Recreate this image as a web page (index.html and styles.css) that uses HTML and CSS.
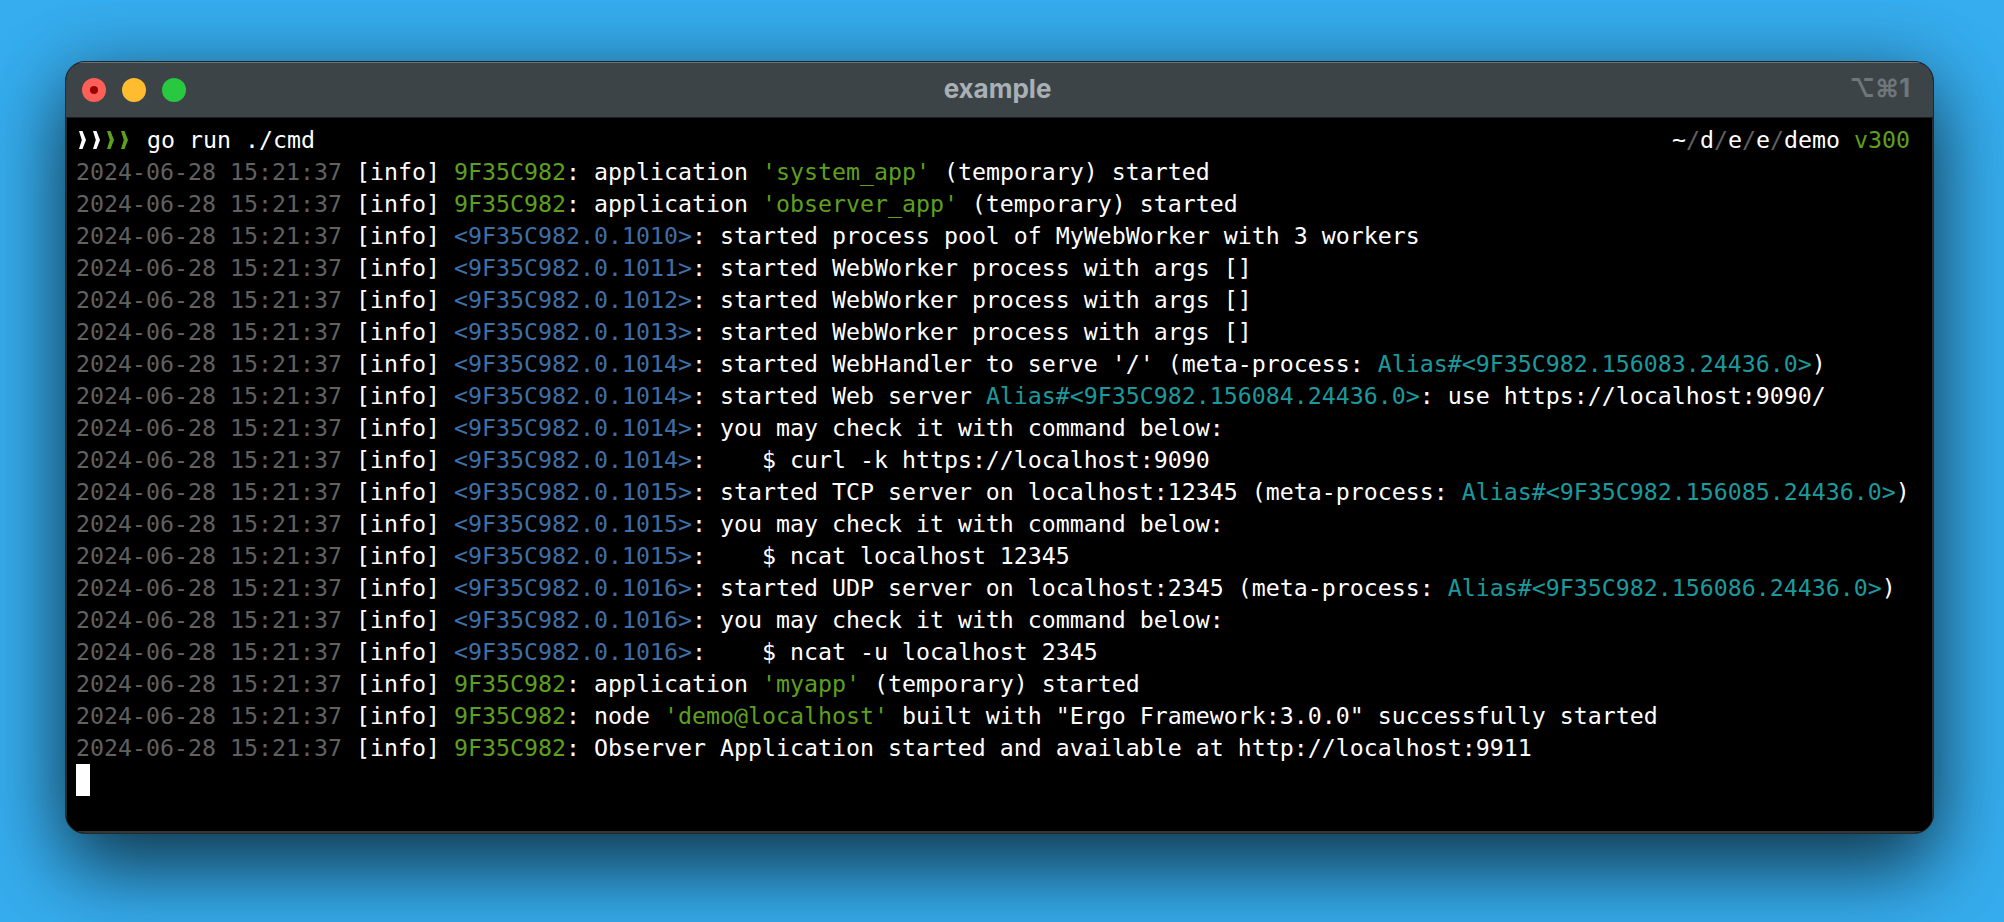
FILE: index.html
```html
<!DOCTYPE html>
<html lang="en">
<head>
<meta charset="utf-8">
<title>example</title>
<link rel="stylesheet" href="styles.css">
</head>
<body>
<main class="window">
  <header class="titlebar">
    <div class="lights">
      <span class="light red"><span class="dot"></span></span>
      <span class="light yellow"></span>
      <span class="light green"></span>
    </div>
    <div class="title">example</div>
    <div class="shortcut">⌥⌘1</div>
  </header>
  <section class="term">
    <div class="row prompt">
      <div class="cmd">
        <svg class="chevrons" width="54" height="18" viewBox="0 0 54 18" aria-hidden="true">
          <path class="cw" d="M0 0h3.500L7 9l-3.500 9H0l2.800-9z"/>
          <path class="cw" d="M14 0h3.500L21 9l-3.500 9H14l2.800-9z"/>
          <path class="cg" d="M28 0h3.500L35 9l-3.500 9H28l2.800-9z"/>
          <path class="cg" d="M42 0h3.500L49 9l-3.500 9H42l2.800-9z"/>
        </svg>
        <span>go run ./cmd</span>
      </div>
      <div>~<span class="g">/</span>d<span class="g">/</span>e<span class="g">/</span>e<span class="g">/</span>demo <span class="gr">v300</span></div>
    </div>
    <div class="row"><span class="g">2024-06-28 15:21:37</span> [info] <span class="gr">9F35C982</span>: application <span class="gr">'system_app'</span> (temporary) started</div>
    <div class="row"><span class="g">2024-06-28 15:21:37</span> [info] <span class="gr">9F35C982</span>: application <span class="gr">'observer_app'</span> (temporary) started</div>
    <div class="row"><span class="g">2024-06-28 15:21:37</span> [info] <span class="b">&lt;9F35C982.0.1010&gt;</span>: started process pool of MyWebWorker with 3 workers</div>
    <div class="row"><span class="g">2024-06-28 15:21:37</span> [info] <span class="b">&lt;9F35C982.0.1011&gt;</span>: started WebWorker process with args []</div>
    <div class="row"><span class="g">2024-06-28 15:21:37</span> [info] <span class="b">&lt;9F35C982.0.1012&gt;</span>: started WebWorker process with args []</div>
    <div class="row"><span class="g">2024-06-28 15:21:37</span> [info] <span class="b">&lt;9F35C982.0.1013&gt;</span>: started WebWorker process with args []</div>
    <div class="row"><span class="g">2024-06-28 15:21:37</span> [info] <span class="b">&lt;9F35C982.0.1014&gt;</span>: started WebHandler to serve '/' (meta-process: <span class="t">Alias#&lt;9F35C982.156083.24436.0&gt;</span>)</div>
    <div class="row"><span class="g">2024-06-28 15:21:37</span> [info] <span class="b">&lt;9F35C982.0.1014&gt;</span>: started Web server <span class="t">Alias#&lt;9F35C982.156084.24436.0&gt;</span>: use https://localhost:9090/</div>
    <div class="row"><span class="g">2024-06-28 15:21:37</span> [info] <span class="b">&lt;9F35C982.0.1014&gt;</span>: you may check it with command below:</div>
    <div class="row"><span class="g">2024-06-28 15:21:37</span> [info] <span class="b">&lt;9F35C982.0.1014&gt;</span>:    $ curl -k https://localhost:9090</div>
    <div class="row"><span class="g">2024-06-28 15:21:37</span> [info] <span class="b">&lt;9F35C982.0.1015&gt;</span>: started TCP server on localhost:12345 (meta-process: <span class="t">Alias#&lt;9F35C982.156085.24436.0&gt;</span>)</div>
    <div class="row"><span class="g">2024-06-28 15:21:37</span> [info] <span class="b">&lt;9F35C982.0.1015&gt;</span>: you may check it with command below:</div>
    <div class="row"><span class="g">2024-06-28 15:21:37</span> [info] <span class="b">&lt;9F35C982.0.1015&gt;</span>:    $ ncat localhost 12345</div>
    <div class="row"><span class="g">2024-06-28 15:21:37</span> [info] <span class="b">&lt;9F35C982.0.1016&gt;</span>: started UDP server on localhost:2345 (meta-process: <span class="t">Alias#&lt;9F35C982.156086.24436.0&gt;</span>)</div>
    <div class="row"><span class="g">2024-06-28 15:21:37</span> [info] <span class="b">&lt;9F35C982.0.1016&gt;</span>: you may check it with command below:</div>
    <div class="row"><span class="g">2024-06-28 15:21:37</span> [info] <span class="b">&lt;9F35C982.0.1016&gt;</span>:    $ ncat -u localhost 2345</div>
    <div class="row"><span class="g">2024-06-28 15:21:37</span> [info] <span class="gr">9F35C982</span>: application <span class="gr">'myapp'</span> (temporary) started</div>
    <div class="row"><span class="g">2024-06-28 15:21:37</span> [info] <span class="gr">9F35C982</span>: node <span class="gr">'demo@localhost'</span> built with "Ergo Framework:3.0.0" successfully started</div>
    <div class="row"><span class="g">2024-06-28 15:21:37</span> [info] <span class="gr">9F35C982</span>: Observer Application started and available at http://localhost:9911</div>
    <div class="cursor"></div>
  </section>
</main>
</body>
</html>
```
FILE: styles.css
```css
html, body { margin: 0; height: 100%; }
body {
  background: #36adee;
  padding: 61px 0 0 65px;
  box-sizing: border-box;
  overflow: hidden;
}
.window {
  width: 1869px;
  height: 773px;
  box-sizing: border-box;
  border: 1px solid #23282b;
  border-radius: 20px;
  overflow: hidden;
  background: #000;
  display: flex;
  flex-direction: column;
  box-shadow: 0 36px 80px rgba(0, 0, 0, .62), 0 0 70px rgba(0, 0, 0, .2);
}
.titlebar {
  height: 56px;
  flex: none;
  box-sizing: border-box;
  background: #3d4447;
  border-top: 1px solid #6b7276;
  border-bottom: 1px solid #1c2022;
  display: grid;
  grid-template-columns: 1fr auto 1fr;
  align-items: center;
  padding: 0 23px 0 16px;
}
.lights { display: flex; gap: 16px; }
.light {
  width: 24px;
  height: 24px;
  border-radius: 50%;
  display: flex;
  align-items: center;
  justify-content: center;
}
.red { background: #ff5f57; }
.yellow { background: #febc2e; }
.green { background: #28c840; }
.dot { width: 8px; height: 8px; border-radius: 50%; background: #990000; }
.title {
  font: 700 26px "Inter", "Liberation Sans", sans-serif;
  color: #a8b0b5;
  padding: 0 0 4px 3px;
}
.shortcut {
  justify-self: end;
  font: 700 25px "Inter", "DejaVu Sans", sans-serif;
  color: #6f777b;
  padding-bottom: 4px;
}
.term {
  flex: 1;
  padding: 6px 23px 0 10px;
  font: 400 23.250px/32px "DejaVu Sans Mono", "Liberation Mono", monospace;
  color: #fff;
  box-shadow: inset 1px 0 #2b2f32, inset -1px 0 #2b2f32, inset 0 -2px #33383b;
}
.row { height: 32px; white-space: pre; }
.prompt { display: flex; justify-content: space-between; }
.cmd { display: flex; align-items: center; gap: 14px; }
.chevrons { margin-left: 3px; display: block; }
.cw { fill: #fff; }
.cg { fill: #5ea01c; }
.g { color: #616161; }
.gr { color: #5ea01c; }
.b { color: #3f6fa8; }
.t { color: #1b9a9e; }
.cursor { width: 14px; height: 32px; background: #fff; }
```
